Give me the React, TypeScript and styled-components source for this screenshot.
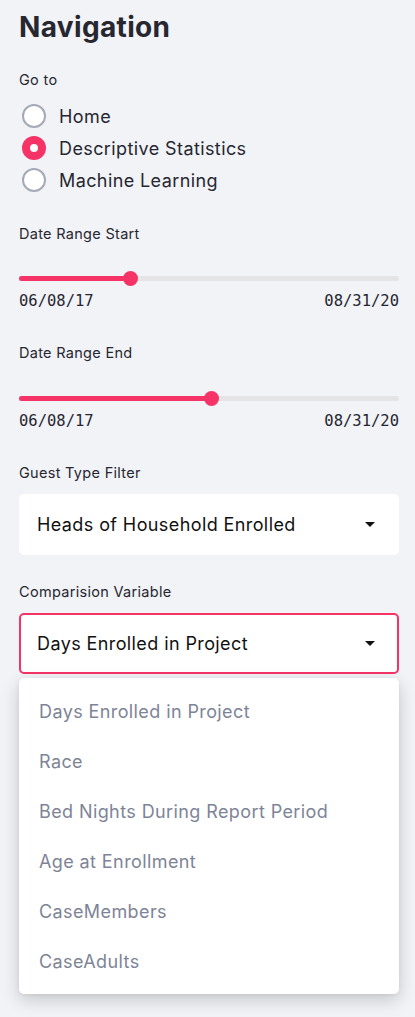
import React from "react";
import styled, { createGlobalStyle } from "styled-components";

const Global = createGlobalStyle`
  html, body { margin: 0; padding: 0; background: #f2f3f7; }
  body { font-family: Inter, "Noto Sans", sans-serif; color: #262730; }
  * { box-sizing: border-box; }
`;

const PINK = "#f63366";

const Sidebar = styled.div`
  width: 415px;
  min-height: 1017px;
  padding: 7px 16px 0 19px;
  display: flex;
  flex-direction: column;
`;

const Heading = styled.h2`
  margin: 0;
  font-size: 28px;
  font-weight: 700;
  line-height: 40px;
  letter-spacing: 0.35px;
  color: #262730;
`;

const Label = styled.div<{ $mt: number }>`
  margin-top: ${(p) => p.$mt}px;
  font-size: 14.5px;
  line-height: 20px;
  letter-spacing: 0.3px;
  color: #262730;
`;

const RadioGroup = styled.div`
  margin-top: 10px;
  display: flex;
  flex-direction: column;
  padding-left: 3px;
`;

const RadioRow = styled.label`
  height: 32px;
  display: flex;
  align-items: center;
  gap: 13px;
  font-size: 18px;
  letter-spacing: 0.4px;
  color: #262730;
`;

const Circle = styled.span<{ $on?: boolean }>`
  width: 24px;
  height: 24px;
  border-radius: 50%;
  background: #fff;
  border: ${(p) => (p.$on ? `8px solid ${PINK}` : "2px solid #a6aab8")};
  flex: none;
`;

const SliderBox = styled.div<{ $mt: number }>`
  margin-top: ${(p) => p.$mt}px;
  height: 24px;
  position: relative;
  display: flex;
  align-items: center;
`;

const Track = styled.div`
  width: 100%;
  height: 5px;
  border-radius: 3px;
  background: #e4e4e6;
  position: relative;
`;

const Fill = styled.div`
  position: absolute;
  left: 0;
  top: 0;
  height: 100%;
  border-radius: 3px;
  background: ${PINK};
`;

const Thumb = styled.div`
  position: absolute;
  top: 50%;
  width: 15px;
  height: 15px;
  margin: -7.5px 0 0 -7.5px;
  border-radius: 50%;
  background: ${PINK};
`;

const Ticks = styled.div`
  height: 22px;
  display: flex;
  justify-content: space-between;
  align-items: center;
  font-family: "DejaVu Sans Mono", "Liberation Mono", monospace;
  font-size: 15.5px;
  color: #262730;
`;

const SelectWrap = styled.div`
  position: relative;
  margin-top: 11px;
`;

const SelectBox = styled.div<{ $focus?: boolean }>`
  height: 61px;
  background: #fff;
  border-radius: 5px;
  border: 2px solid ${(p) => (p.$focus ? PINK : "transparent")};
  padding: 0 22px 0 16px;
  display: flex;
  align-items: center;
  justify-content: space-between;
  font-size: 18px;
  letter-spacing: 0.4px;
  color: #111;
`;

const Caret = styled.span`
  width: 0;
  height: 0;
  border-left: 5px solid transparent;
  border-right: 5px solid transparent;
  border-top: 5px solid #111;
`;

const Menu = styled.ul`
  position: absolute;
  left: 0;
  right: 0;
  top: calc(100% + 4px);
  margin: 0;
  padding: 8px 0;
  list-style: none;
  background: #fff;
  border-radius: 5px;
  box-shadow: 0 6px 18px rgba(0, 0, 0, 0.18), 0 1px 4px rgba(0, 0, 0, 0.06);
  z-index: 2;
`;

const MenuItem = styled.li`
  height: 50px;
  padding-left: 20px;
  display: flex;
  align-items: center;
  font-size: 18px;
  letter-spacing: 0.4px;
  color: #7e8497;
`;

function Slider({ pos, mt }: { pos: number; mt: number }) {
  return (
    <SliderBox $mt={mt}>
      <Track>
        <Fill style={{ width: `${pos * 100}%` }} />
        <Thumb style={{ left: `${pos * 100}%` }} />
      </Track>
    </SliderBox>
  );
}

const options = [
  "Days Enrolled in Project",
  "Race",
  "Bed Nights During Report Period",
  "Age at Enrollment",
  "CaseMembers",
  "CaseAdults",
];

export default function App() {
  return (
    <>
      <Global />
      <Sidebar>
        <Heading>Navigation</Heading>
        <Label $mt={23}>Go to</Label>
        <RadioGroup>
          <RadioRow><Circle />Home</RadioRow>
          <RadioRow><Circle $on />Descriptive Statistics</RadioRow>
          <RadioRow><Circle />Machine Learning</RadioRow>
        </RadioGroup>
        <Label $mt={28}>Date Range Start</Label>
        <Slider pos={111 / 380} mt={22} />
        <Ticks><span>06/08/17</span><span>08/31/20</span></Ticks>
        <Label $mt={31}>Date Range End</Label>
        <Slider pos={192 / 380} mt={23} />
        <Ticks><span>06/08/17</span><span>08/31/20</span></Ticks>
        <Label $mt={31}>Guest Type Filter</Label>
        <SelectWrap>
          <SelectBox>
            Heads of Household Enrolled
            <Caret />
          </SelectBox>
        </SelectWrap>
        <Label $mt={27}>Comparision Variable</Label>
        <SelectWrap>
          <SelectBox $focus>
            Days Enrolled in Project
            <Caret />
          </SelectBox>
          <Menu>
            {options.map((o) => (
              <MenuItem key={o}>{o}</MenuItem>
            ))}
          </Menu>
        </SelectWrap>
      </Sidebar>
    </>
  );
}
